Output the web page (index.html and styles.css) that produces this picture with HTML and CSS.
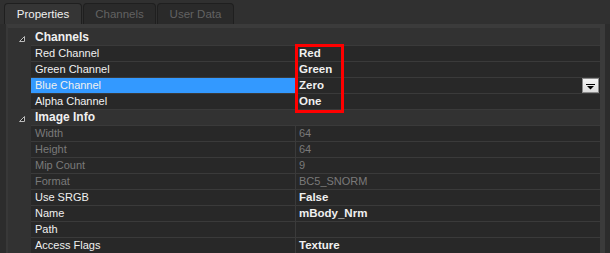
FILE: index.html
```html
<!DOCTYPE html>
<html lang="en">
<head>
  <meta charset="UTF-8">
  <title>Texture Properties</title>
  <link rel="stylesheet" href="styles.css">
</head>
<body>

<!-- Tabs -->
<div class="tabs">
  <div class="tab active">Properties</div>
  <div class="tab">Channels</div>
  <div class="tab">User Data</div>
</div>

<!-- Property Grid -->
<div class="panel">
  <div class="row header">
    <div class="gutter"><svg width="6" height="6" viewBox="0 0 6 6"><polygon points="5.5,0.5 5.5,5.5 0.5,5.5" fill="#222" stroke="#bbb" stroke-width="1"/></svg></div>
    <div class="title">Channels</div>
  </div>
  <div class="row">
    <div class="gutter"></div>
    <div class="label">Red Channel</div>
    <div class="value">Red</div>
  </div>
  <div class="row">
    <div class="gutter"></div>
    <div class="label">Green Channel</div>
    <div class="value">Green</div>
  </div>
  <div class="row">
    <div class="gutter"></div>
    <div class="label selected">Blue Channel</div>
    <div class="value">Zero
      <span class="drop"><svg width="9" height="6" viewBox="0 0 9 6"><rect x="0" y="0" width="9" height="1" fill="#000"/><polygon points="1,2 8,2 4.5,5.5" fill="#000"/></svg></span>
    </div>
  </div>
  <div class="row">
    <div class="gutter"></div>
    <div class="label">Alpha Channel</div>
    <div class="value">One</div>
  </div>

  <div class="row header">
    <div class="gutter"><svg width="6" height="6" viewBox="0 0 6 6"><polygon points="5.5,0.5 5.5,5.5 0.5,5.5" fill="#222" stroke="#bbb" stroke-width="1"/></svg></div>
    <div class="title">Image Info</div>
  </div>
  <div class="row disabled">
    <div class="gutter"></div>
    <div class="label">Width</div>
    <div class="value">64</div>
  </div>
  <div class="row disabled">
    <div class="gutter"></div>
    <div class="label">Height</div>
    <div class="value">64</div>
  </div>
  <div class="row disabled">
    <div class="gutter"></div>
    <div class="label">Mip Count</div>
    <div class="value">9</div>
  </div>
  <div class="row disabled">
    <div class="gutter"></div>
    <div class="label">Format</div>
    <div class="value">BC5_SNORM</div>
  </div>
  <div class="row">
    <div class="gutter"></div>
    <div class="label">Use SRGB</div>
    <div class="value">False</div>
  </div>
  <div class="row">
    <div class="gutter"></div>
    <div class="label">Name</div>
    <div class="value">mBody_Nrm</div>
  </div>
  <div class="row">
    <div class="gutter"></div>
    <div class="label">Path</div>
    <div class="value"></div>
  </div>
  <div class="row">
    <div class="gutter"></div>
    <div class="label">Access Flags</div>
    <div class="value">Texture</div>
  </div>
</div>

<!-- Highlight -->
<div class="highlight"></div>

</body>
</html>
```

FILE: styles.css
```css
/* General Styles */
body {
  font-family: "Liberation Sans", Arial, sans-serif;
  font-size: 11px;
  background-color: #2c2c2c;
  color: #f0f0f0;
  margin: 0;
  padding: 0;
  height: 253px;
  overflow: hidden;
}

/* Tabs */
.tabs {
  display: flex;
  height: 24px;
  padding-left: 4px;
  background-color: #303030;
  box-sizing: border-box;
  padding-top: 3px;
}
.tab {
  width: 78px;
  height: 21px;
  box-sizing: border-box;
  border: 1px solid #1f1f1f;
  border-bottom: none;
  border-radius: 4px 4px 0 0;
  background-color: #2a2a2a;
  color: #626262;
  text-align: center;
  line-height: 21px;
  font-size: 11.5px;
  margin-right: 0;
}
.tab + .tab {
  margin-left: 1px;
  width: 73px;
}
.tab:last-child {
  width: 77px;
}
.tab.active {
  background-color: #353535;
  color: #f0f0f0;
}

/* Panel */
.panel {
  margin: 0 5px 0 6px;
  border-top: 4px solid #3b3b3b;
  border-left: 2px solid #383838;
  border-right: 5px solid #3b3b3b;
  background-color: #323232;
  padding-top: 2px;
}
.row {
  display: flex;
  height: 16px;
}
.gutter {
  width: 23px;
  flex: none;
  display: flex;
  align-items: center;
  padding-left: 11px;
  box-sizing: border-box;
}
.gutter svg {
  margin-top: 1px;
}
.title, .label, .value {
  height: 16px;
  line-height: 15px;
  box-sizing: border-box;
  border-bottom: 1px solid #3a3a3a;
  padding-left: 4px;
  white-space: nowrap;
}
.title {
  flex: 1;
  font-weight: bold;
  font-size: 12px;
}
.label {
  width: 265px;
  flex: none;
  background-color: #282828;
  border-right: 1px solid #3a3a3a;
}
.label.selected {
  background-color: #3399ff;
}
.value {
  flex: 1;
  background-color: #282828;
  font-weight: bold;
  font-size: 11.5px;
  position: relative;
  padding-left: 3px;
}
.disabled .label,
.disabled .value {
  color: #7a7a7a;
  font-weight: normal;
  font-size: 11px;
}
.drop {
  position: absolute;
  right: 1px;
  top: 0;
  width: 17px;
  height: 15px;
  box-sizing: border-box;
  border: 1px solid #8a8a8a;
  background: linear-gradient(#f4f4f4, #dcdcdc);
  display: flex;
  align-items: center;
  justify-content: center;
}
.drop svg {
  margin-top: 2px;
}

/* Red callout box */
.highlight {
  position: absolute;
  left: 295px;
  top: 44px;
  width: 49px;
  height: 69px;
  box-sizing: border-box;
  border: 3px solid #ff0000;
}
```
